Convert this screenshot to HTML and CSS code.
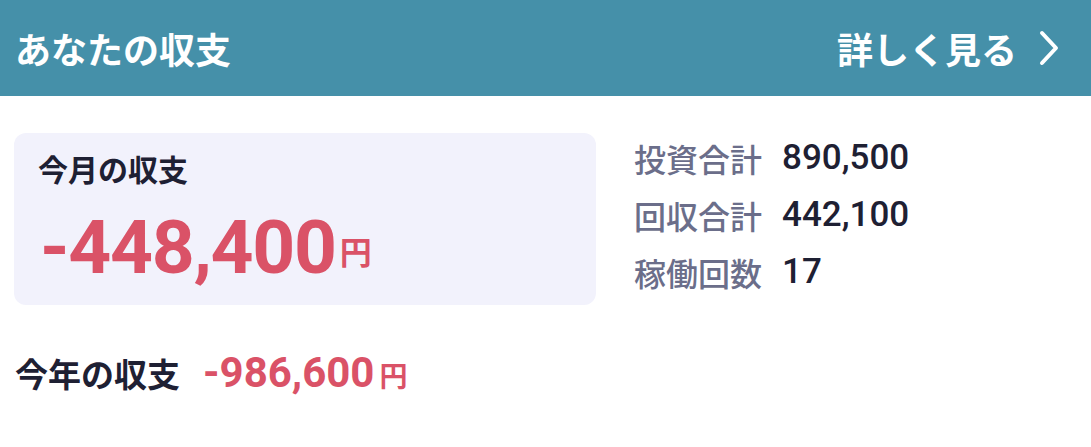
FILE: index.html
```html
<!DOCTYPE html>
<html lang="ja">
<head>
  <meta charset="UTF-8" />
  <meta name="viewport" content="width=device-width, initial-scale=1.0"/>
  <title>あなたの収支</title>
  <link rel="stylesheet" href="styles.css">
</head>
<body>
  <div class="header">
    <h2>あなたの収支</h2>
    <a class="more" href="#">詳しく見る
      <svg width="20" height="36" viewBox="0 0 20 36"><path d="M3 3 L17 18 L3 33" fill="none" stroke="#fff" stroke-width="4" stroke-linecap="round" stroke-linejoin="round"/></svg>
    </a>
  </div>

  <div class="content">
    <div class="summary">
      <div class="card">
        <div class="card-title">今月の収支</div>
        <div class="amount-big">-448,400<span class="yen">円</span></div>
      </div>
      <div class="stats">
        <div class="stat"><span class="label">投資合計</span><span class="value">890,500</span></div>
        <div class="stat"><span class="label">回収合計</span><span class="value">442,100</span></div>
        <div class="stat"><span class="label">稼働回数</span><span class="value">17</span></div>
      </div>
    </div>

    <div class="year">
      <span class="year-title">今年の収支</span>
      <span class="amount-small">-986,600<span class="yen">円</span></span>
    </div>
  </div>
</body>
</html>
```

FILE: styles.css
```css
body {
  margin: 0;
  font-family: Roboto, "Noto Sans CJK JP", sans-serif;
  background: #fff;
  color: #1e2033;
}
.header {
  height: 96px;
  background: #4590a9;
  display: flex;
  align-items: center;
  justify-content: space-between;
  padding: 0 32px 0 15px;
}
.header h2 {
  margin: 0;
  color: #fff;
  font-size: 36px;
  font-weight: bold;
}
.more {
  color: #fff;
  text-decoration: none;
  font-size: 36px;
  font-weight: bold;
  display: flex;
  align-items: center;
  gap: 22px;
}
.content {
  padding: 37px 0 0 14px;
}
.summary {
  display: flex;
  align-items: flex-start;
  gap: 38px;
}
.card {
  width: 582px;
  height: 172px;
  box-sizing: border-box;
  background: #f2f2fc;
  border-radius: 12px;
  padding: 18px 24px 0;
}
.card-title {
  font-size: 30px;
  font-weight: bold;
  line-height: 40px;
}
.amount-big {
  color: #da5267;
  font-size: 75px;
  font-weight: bold;
  letter-spacing: -1.3px;
  line-height: 88px;
  margin: 12px 0 0 2px;
}
.amount-big .yen {
  font-size: 32px;
  letter-spacing: 0;
  margin-left: 4px;
  vertical-align: 9px;
}
.stats {
  margin-top: -4px;
}
.stat {
  display: flex;
  align-items: center;
  height: 57px;
}
.label {
  color: #6b6e8a;
  font-size: 32px;
  font-weight: 500;
  width: 148px;
}
.value {
  font-size: 35px;
  font-weight: 500;
}
.year {
  display: flex;
  align-items: baseline;
  gap: 23px;
  margin: 43px 0 0 1px;
}
.year-title {
  font-size: 33px;
  font-weight: bold;
}
.amount-small {
  color: #da5267;
  font-size: 42px;
  font-weight: bold;
}
.amount-small .yen {
  font-size: 28px;
  margin-left: 5px;
}
```
